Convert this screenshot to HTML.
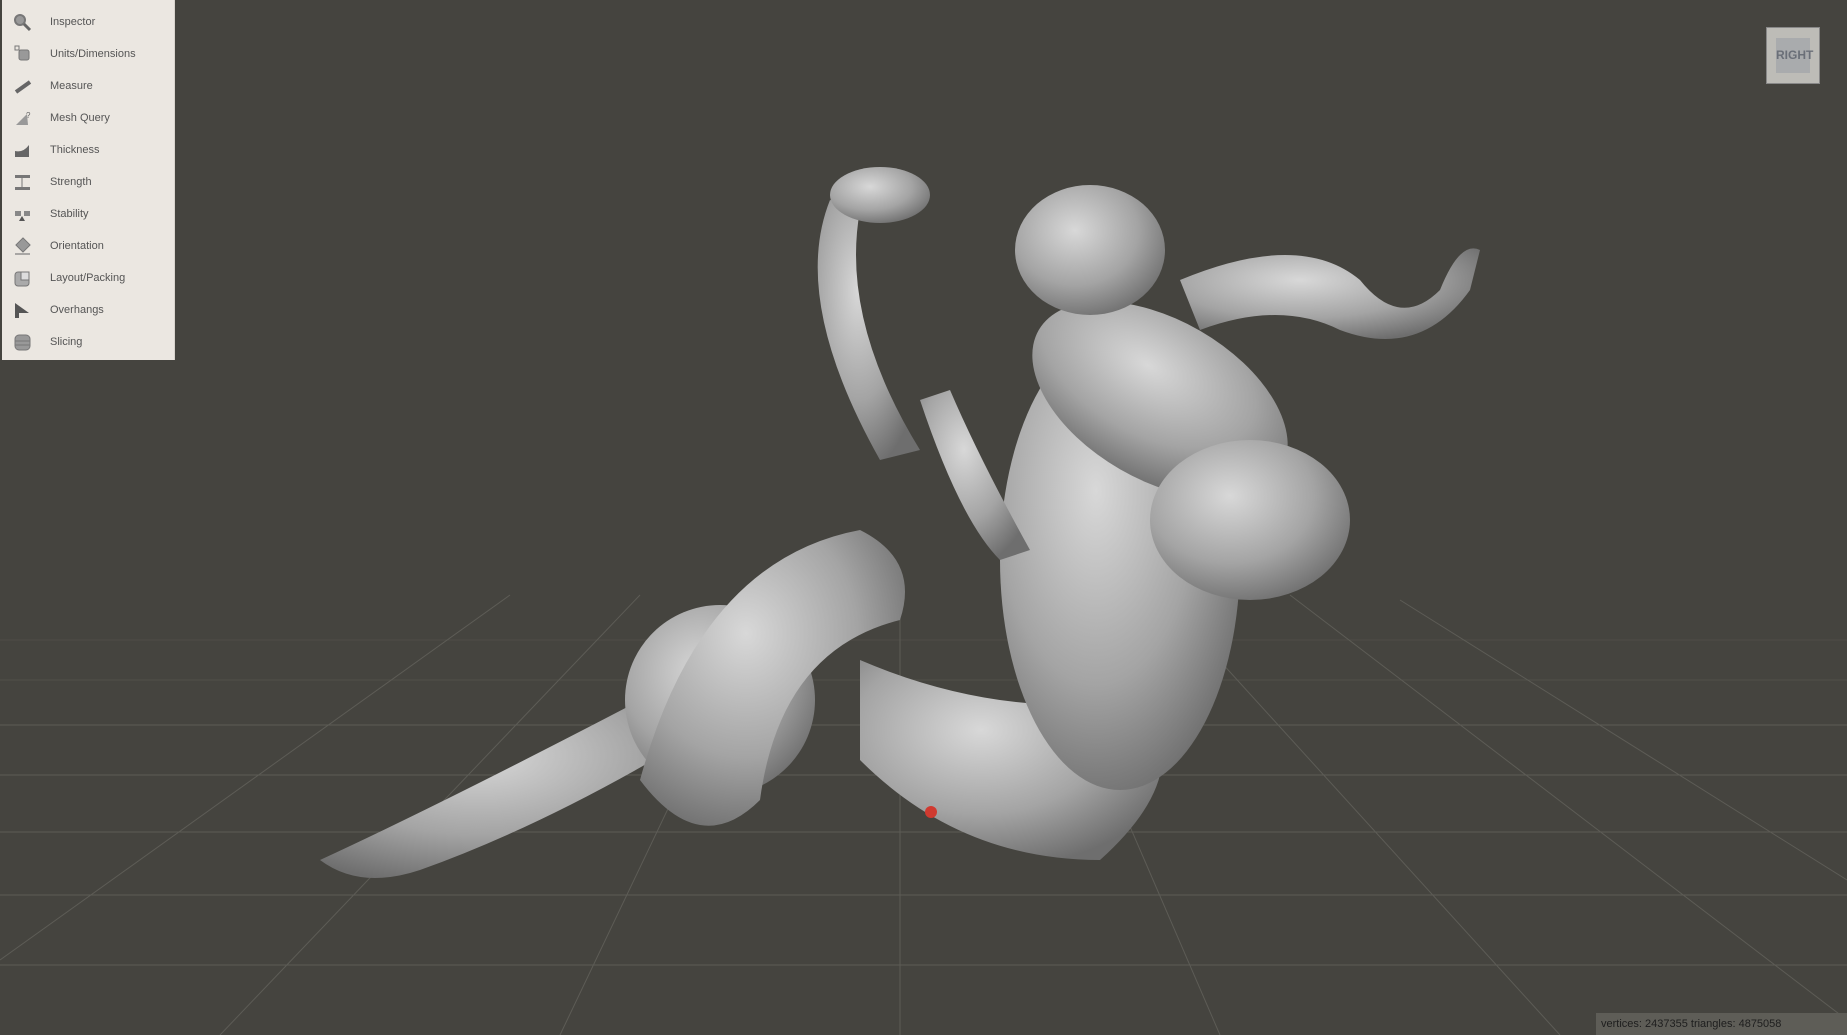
<!DOCTYPE html>
<html><head><style>
html,body{margin:0;padding:0;width:1847px;height:1035px;overflow:hidden;background:#45443f;font-family:"Liberation Sans",sans-serif}
#panel{position:absolute;left:2px;top:0;width:172px;height:360px;background:#ebe7e1;border-right:1px solid #d8d4ce}
.it{position:absolute;left:0;height:32px;width:172px}
.it span{position:absolute;left:48px;top:12px;font-size:11px;color:#555}
.it svg{position:absolute;left:11px;top:9px}
#st{position:absolute;left:1596px;top:1013px;width:251px;height:22px;background:#5e5d57;font-size:11px;color:#1e1e1e;line-height:22px;padding-left:5px;box-sizing:border-box}
#cube{position:absolute;left:1766px;top:27px;width:52px;height:55px;background:#bdbcb7;border:1px solid #888}
#cube div{position:absolute;left:9px;top:10px;width:34px;height:35px;background:#a9abad;font-size:12px;color:#6a6f78;font-weight:bold;text-align:center;line-height:35px}
</style></head><body>
<svg width="1847" height="1035" style="position:absolute;left:0;top:0">
<defs>
<radialGradient id="g" cx="40%" cy="35%" r="70%"><stop offset="0" stop-color="#d8d8d8"/><stop offset="0.6" stop-color="#a4a4a4"/><stop offset="1" stop-color="#6e6e6e"/></radialGradient>
</defs>
<g stroke="#5d5c56" stroke-width="1" fill="none">
<line x1="0" y1="640" x2="1847" y2="640" opacity=".4"/>
<line x1="0" y1="680" x2="1847" y2="680" opacity=".5"/>
<line x1="0" y1="725" x2="1847" y2="725"/>
<line x1="0" y1="775" x2="1847" y2="775"/>
<line x1="0" y1="832" x2="1847" y2="832"/>
<line x1="0" y1="895" x2="1847" y2="895"/>
<line x1="0" y1="965" x2="1847" y2="965"/>
<line x1="510" y1="595" x2="0" y2="960"/>
<line x1="640" y1="595" x2="220" y2="1035"/>
<line x1="770" y1="595" x2="560" y2="1035"/>
<line x1="900" y1="595" x2="900" y2="1035"/>
<line x1="1030" y1="595" x2="1220" y2="1035"/>
<line x1="1160" y1="595" x2="1560" y2="1035"/>
<line x1="1290" y1="595" x2="1847" y2="1020"/>
<line x1="1400" y1="600" x2="1847" y2="880"/>
</g>
<g fill="url(#g)" stroke="none">
<path d="M320 860 Q450 800 660 690 L720 720 Q560 820 420 870 Q360 890 320 860Z"/>
<ellipse cx="720" cy="700" rx="95" ry="95"/>
<path d="M640 780 Q700 560 860 530 Q920 560 900 620 Q780 650 760 800 Q700 860 640 780Z"/>
<path d="M860 660 Q1000 720 1140 700 Q1200 770 1100 860 Q960 860 860 760Z"/>
<ellipse cx="1120" cy="560" rx="120" ry="230"/>
<ellipse cx="1160" cy="400" rx="140" ry="80" transform="rotate(30 1160 400)"/>
<ellipse cx="1250" cy="520" rx="100" ry="80"/>
<path d="M830 200 Q790 300 880 460 L920 450 Q840 320 860 210Z"/>
<ellipse cx="880" cy="195" rx="50" ry="28"/>
<ellipse cx="1090" cy="250" rx="75" ry="65"/>
<path d="M1180 280 Q1300 230 1360 280 Q1400 330 1440 290 Q1460 240 1480 250 L1470 290 Q1420 360 1340 330 Q1280 300 1200 330Z"/>
<path d="M920 400 Q960 520 1000 560 L1030 550 Q980 460 950 390Z"/>
</g>
<circle cx="931" cy="812" r="6" fill="#d03a30"/>
</svg>
<div id="panel">
<div class="it" style="top:4px"><svg width="20" height="20"><circle cx="7" cy="7" r="5" fill="#999" stroke="#777" stroke-width="2"/><line x1="11" y1="11" x2="17" y2="17" stroke="#666" stroke-width="3"/></svg><span>Inspector</span></div>
<div class="it" style="top:36px"><svg width="20" height="20"><rect x="6" y="5" width="10" height="10" rx="2" fill="#999" stroke="#777"/><rect x="2" y="1" width="4" height="4" fill="none" stroke="#777"/></svg><span>Units/Dimensions</span></div>
<div class="it" style="top:68px"><svg width="20" height="20"><line x1="3" y1="15" x2="17" y2="5" stroke="#666" stroke-width="4"/></svg><span>Measure</span></div>
<div class="it" style="top:100px"><svg width="20" height="20"><path d="M3 16 L14 5 L15 16Z" fill="#999"/><text x="13" y="9" font-size="8" fill="#666">?</text></svg><span>Mesh Query</span></div>
<div class="it" style="top:132px"><svg width="20" height="20"><path d="M2 16 L2 10 Q10 12 16 4 L16 16Z" fill="#666"/></svg><span>Thickness</span></div>
<div class="it" style="top:164px"><svg width="20" height="20"><rect x="2" y="2" width="15" height="3" fill="#777"/><rect x="2" y="14" width="15" height="3" fill="#777"/><line x1="9" y1="5" x2="9" y2="14" stroke="#777"/></svg><span>Strength</span></div>
<div class="it" style="top:196px"><svg width="20" height="20"><rect x="2" y="6" width="6" height="5" fill="#888"/><rect x="11" y="6" width="6" height="5" fill="#888"/><path d="M9 11 L6 16 L12 16Z" fill="#555"/></svg><span>Stability</span></div>
<div class="it" style="top:228px"><svg width="20" height="20"><rect x="5" y="3" width="10" height="10" transform="rotate(45 10 8)" fill="#999" stroke="#777"/><line x1="2" y1="17" x2="17" y2="17" stroke="#666"/></svg><span>Orientation</span></div>
<div class="it" style="top:260px"><svg width="20" height="20"><rect x="2" y="3" width="14" height="14" rx="3" fill="#aaa" stroke="#777"/><rect x="8" y="3" width="8" height="8" fill="#ddd" stroke="#777"/></svg><span>Layout/Packing</span></div>
<div class="it" style="top:292px"><svg width="20" height="20"><path d="M2 2 L16 12 L2 12Z" fill="#555"/><rect x="2" y="12" width="4" height="5" fill="#555"/></svg><span>Overhangs</span></div>
<div class="it" style="top:324px"><svg width="20" height="20"><rect x="2" y="2" width="15" height="15" rx="4" fill="#999" stroke="#777"/><line x1="2" y1="8" x2="17" y2="8" stroke="#777"/><line x1="2" y1="12" x2="17" y2="12" stroke="#777"/></svg><span>Slicing</span></div>
</div>
<div id="cube"><div>RIGHT</div></div>
<div id="st">vertices: 2437355 triangles: 4875058</div>
</body></html>
